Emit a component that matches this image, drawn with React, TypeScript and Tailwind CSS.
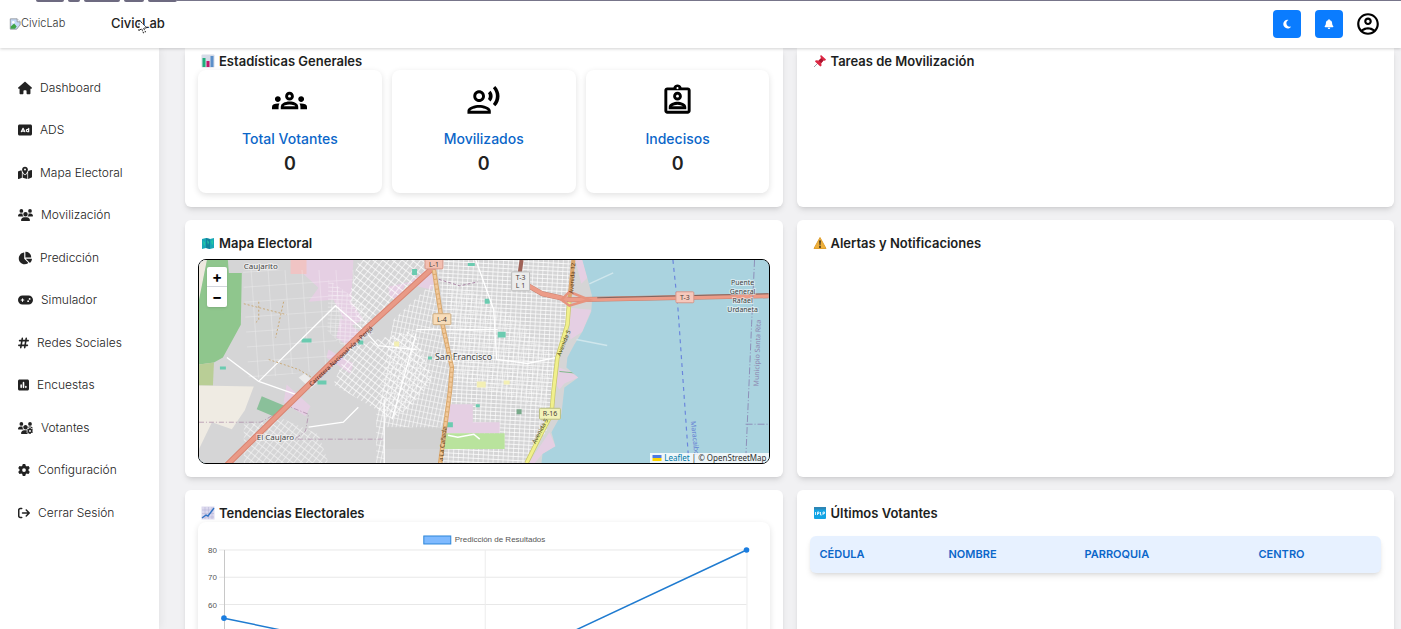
import type { ReactNode } from "react";
import {
  FaHouse,
  FaRectangleAd,
  FaMapLocationDot,
  FaUsers,
  FaChartPie,
  FaGamepad,
  FaHashtag,
  FaSquarePollVertical,
  FaUsersGear,
  FaGear,
  FaArrowRightFromBracket,
  FaMoon,
  FaBell,
} from "react-icons/fa6";
import {
  MdOutlineGroups,
  MdOutlineRecordVoiceOver,
  MdOutlineAssignmentInd,
  MdOutlineAccountCircle,
} from "react-icons/md";

// the icons differ in width, the label follows each one
const navItems = [
  { label: "Dashboard", Icon: FaHouse, size: "w-3.5" },
  { label: "ADS", Icon: FaRectangleAd, size: "w-3.5" },
  { label: "Mapa Electoral", Icon: FaMapLocationDot, size: "w-3.5" },
  { label: "Movilización", Icon: FaUsers, size: "w-[15px]" },
  { label: "Predicción", Icon: FaChartPie, size: "w-3.5" },
  { label: "Simulador", Icon: FaGamepad, size: "w-[15px]" },
  { label: "Redes Sociales", Icon: FaHashtag, size: "w-[11px]" },
  { label: "Encuestas", Icon: FaSquarePollVertical, size: "w-[11px]" },
  { label: "Votantes", Icon: FaUsersGear, size: "w-[15px]" },
  { label: "Configuración", Icon: FaGear, size: "w-3" },
  { label: "Cerrar Sesión", Icon: FaArrowRightFromBracket, size: "w-3" },
];

const stats = [
  { label: "Total Votantes", value: 0, icon: <MdOutlineGroups /> },
  { label: "Movilizados", value: 0, icon: <MdOutlineRecordVoiceOver /> },
  { label: "Indecisos", value: 0, icon: <MdOutlineAssignmentInd /> },
];

const BarsIcon = () => (
  <svg viewBox="0 0 14 14" className="size-3.5">
    <rect x="0.5" y="0.5" width="13" height="13" rx="1" fill="#d5dbe8" />
    <rect x="1.5" y="4" width="3" height="9" fill="#1fae7a" />
    <rect x="5.5" y="7" width="3" height="6" fill="#c2186b" />
    <rect x="9.5" y="2" width="3" height="11" fill="#5b8fc9" />
  </svg>
);

const MapIcon = () => (
  <svg viewBox="0 0 14 14" className="size-3.5">
    <path d="M1 3l4-1 4 1 4-1v10l-4 1-4-1-4 1z" fill="#18a7b5" />
    <path d="M5 2l4 1v10l-4-1z" fill="#13839c" />
    <path d="M2 5l2 1v3l-1 1zM6 4l2 2-1 3zM10 5l2-1v4l-1 1z" fill="#22c7a5" />
  </svg>
);

const TrendIcon = () => (
  <svg viewBox="0 0 14 14" className="size-3.5">
    <rect x="0.5" y="0.5" width="13" height="13" fill="#dcd9ee" />
    <path d="M1 4h12M1 7.500h12M1 11h12M4 1v12M7.500 1v12M11 1v12" stroke="#b9b7d8" strokeWidth="0.6" />
    <path d="M1 12l4-3 2 1 6-8" stroke="#3173c4" strokeWidth="1.4" fill="none" />
  </svg>
);

const PinIcon = () => (
  <svg viewBox="0 0 14 14" className="size-3.5">
    <path d="M5.500 8.500L1 13" stroke="#9aa0a8" strokeWidth="1" />
    <path d="M8 1l5 4.500-1 1.200-1.500-.2-2.200 2.400.2 2.800-1.200.8L2 7.500l.8-1.200 2.900.2L8 4.200 7.200 2z" fill="#dc2743" />
    <path d="M5.700 6.500L8 4.200l2.500 2.300-2.200 2.400z" fill="#a9142f" />
  </svg>
);

const WarningIcon = () => (
  <svg viewBox="0 0 14 14" className="size-3.5">
    <path d="M7 1.500l6 11H1z" fill="#eeb03c" stroke="#e0a030" strokeLinejoin="round" />
    <path d="M6.200 4.500h1.600L7.400 9.500h-.8z" fill="#2b2118" />
    <circle cx="7" cy="11" r="0.9" fill="#2b2118" />
  </svg>
);

const BallotIcon = () => (
  <svg viewBox="0 0 14 14" className="size-3.5">
    <rect x="1" y="1" width="12" height="12" rx="1" fill="#12a4e4" />
    <rect x="1" y="1" width="12" height="2.500" fill="#2d86b5" />
    <path d="M2.500 6v3M4.500 6v3M4.500 6h1.500v1.500H4.500M7.500 6v3h1.200M10 9V6h1.500v1.500H10" stroke="#e6f6ff" strokeWidth="0.9" fill="none" />
  </svg>
);

type CardProps = { title: string; icon: ReactNode; className?: string; children?: ReactNode };

const Card = ({ title, icon, className = "rounded-md pt-4", children }: CardProps) => (
  <section className={`bg-white px-[13px] shadow-md ${className}`}>
    <h2 className="flex items-center gap-1 pl-[3px] text-[13px] leading-[14px] font-semibold text-[#1c1e21]">
      {icon}
      {title}
    </h2>
    {children}
  </section>
);

const Shield = ({ x, y, w, h = 11, fill, stroke, text }: { x: number; y: number; w: number; h?: number; fill: string; stroke: string; text: string[] }) => (
  <g>
    <rect x={x} y={y} width={w} height={h} rx="1" fill={fill} stroke={stroke} />
    {text.map((t, i) => (
      <text key={i} x={x + w / 2} y={y + 8 + i * 8} textAnchor="middle" fontSize="7" fill="#4a4038">
        {t}
      </text>
    ))}
  </g>
);

const ElectoralMap = () => (
  <div className="relative mt-[9px] h-[205px] overflow-hidden rounded-lg border border-black bg-[#aad3df]">
    <svg viewBox="0 0 572 204" preserveAspectRatio="xMidYMid slice" className="size-full font-['Noto_Sans',sans-serif]">
      <defs>
        <pattern id="fine" width="5" height="4" patternUnits="userSpaceOnUse" patternTransform="rotate(3)">
          <path d="M0 0H5M0 0V4" stroke="#fff" strokeWidth="1.300" />
        </pattern>
        <pattern id="tilt" width="5" height="6" patternUnits="userSpaceOnUse" patternTransform="rotate(38)">
          <path d="M0 0H5M0 0V6" stroke="#fff" strokeWidth="1.300" />
        </pattern>
        <pattern id="slant" width="4" height="6" patternUnits="userSpaceOnUse" patternTransform="rotate(12)">
          <path d="M0 0H4M0 0V6" stroke="#fff" strokeWidth="1.200" />
        </pattern>
        <pattern id="wide" width="17" height="15" patternUnits="userSpaceOnUse" patternTransform="rotate(-4)">
          <path d="M0 0H17M0 0V15" stroke="#fff" strokeWidth="1" />
        </pattern>
        <clipPath id="land">
          <path d="M0 0H385L390 18 395 37 394 52 385 72 377 85 370 98 369 108 381 118 367 128 364 155 354 173 358 187 345 195 344 204H0z" />
        </clipPath>
      </defs>
      <rect width="572" height="204" fill="#aad3df" />
      <g clipPath="url(#land)">
        <rect width="400" height="204" fill="#d5d5d6" />
        <path d="M0 0H8L0 42z" fill="#eee9df" />
        <path d="M8 0H29L30 13 43 13 42 65 24 98 15 103 0 105V40z" fill="#8fc68d" />
        <path d="M0 105L15 103 14 126 0 126z" fill="#b9ce96" />
        <path d="M0 126L55 127 46 151 33 170 13 163 0 190z" fill="#efebe3" />
        <path d="M63 137L87 147 77 158 58 150z" fill="#8ac09a" />
        <path d="M107 0H155L153 42 165 60 150 68 135 40 110 42 120 28 105 14z" fill="#e5cfe3" />
        <path d="M92 0h16v14H92z" fill="#f0c4c4" />
        <path d="M190 27L212 22 228 10 238 16 234 30 208 24 200 39 192 38z" fill="#e5cfe3" />
        <path d="M130 90L155 104 152 114 128 98zM88 125l24 22-5 10-22-14z" fill="#e5cfe3" />
        <path d="M142 58l22 16-12 14-14-10z" fill="#e5cfe3" />

        <path d="M160 0L232 0 228 14 165 68 150 40z" fill="url(#tilt)" />
        <path d="M150 88L215 70 235 120 215 145 195 160 135 125z" fill="url(#tilt)" />
        <path d="M195 60L238 20 253 110 246 170 186 168 186 204 178 204V155z" fill="url(#slant)" />
        <path d="M238 0H374L370 60 356 130 350 170 328 204H256L244 204 256 120z" fill="url(#fine)" />
        <path d="M250 16L320 60 355 96 348 150 256 120z" fill="url(#slant)" opacity="0.600" />
        <path d="M45 165l40-5 35 15 10 29H45z" fill="url(#tilt)" opacity="0.700" />
        <path d="M44 10H160L130 110 50 120z" fill="url(#wide)" opacity="0.500" />
        <path d="M130 20l36 25 10 28-25 20-22-22z" fill="url(#fine)" opacity="0.500" />
        <path d="M186 168h58v22h-58z" fill="#cfcfd0" opacity="0.800" />
        <path d="M100 118l6-4 12 10-6 5z" fill="#ececec" />

        <path d="M250 145h25v18h27v11H245z" fill="#e5cfe3" />
        <path d="M245 174h62v16H245z" fill="#b9e39d" />
        <path d="M250 176l10 2 16-3 6 5" stroke="#fff" strokeWidth="1.500" fill="none" />
        <path d="M378 0l7 0 5 18-6 6zM372 48l22 2-9 22-12 8zM362 108l10 4 9 6-14 6-5 6-4-6zM352 173l6 14-13 8-8 9h-6z" fill="#e5cfe3" />
        <path d="M362 112l20 2" stroke="#7fb789" />
        <path d="M279 122h9v6h-9zM196 82h5v5h-5zM306 121h6v4h-6z" fill="#f3efb4" />
        <path d="M103 79h10v4h-10zM119 121h9v4h-9zM21 107h6v3h-6zM160 81h5v4h-5zM230 97h4v3h-4zM300 72h8v6h-8zM287 39h5v5h-5zM270 3h7v3h-7zM214 9h5v6h-5zM249 163h6v5h-6zM278 145h4v3h-4z" fill="#6bcbb0" />
        <path d="M319 150h5v5h-5z" fill="#78a98a" />

        <path d="M60 122L137 46 167 72 180 86 218 90M28 98L60 122 100 136M218 70H300M218 74L194 160M110 168L145 163 160 148M278 0L296 50 299 100 330 104 358 98M186 140V204" stroke="#fff" strokeWidth="1.300" fill="none" />
        <path d="M45 44L88 55M60 42v18l-4 4M85 42l-8 36M70 100l30 10 20 12" stroke="#c9a979" strokeDasharray="2 2" fill="none" />
        <path d="M0 163H62L90 147 110 155 107 172 96 180H186" stroke="#a884a4" strokeDasharray="5 2 1 2" fill="none" opacity="0.700" />
        <path d="M236 18L262 26 280 22" stroke="#a884a4" strokeDasharray="3 2" fill="none" />

        <path d="M28 206L169 68 237 6" stroke="#d98472" strokeWidth="6" fill="none" />
        <path d="M28 206L169 68 237 6" stroke="#e99a87" strokeWidth="4" fill="none" />
        <path d="M236 10L244 62 254 108 252 132 242 206" stroke="#d9a86e" strokeWidth="4.500" fill="none" />
        <path d="M236 10L244 62 254 108 252 132 242 206" stroke="#f2c99a" strokeWidth="2.500" strokeDasharray="4 1" fill="none" />
      </g>

      <path d="M376 0L372 40" stroke="#dba66c" strokeWidth="4" fill="none" />
      <path d="M372 40L370 65 360 98 356 132 354 155 345 172 329 204" stroke="#c9c86c" strokeWidth="4.500" fill="none" />
      <path d="M372 40L370 65 360 98 356 132 354 155 345 172 329 204" stroke="#f1f08c" strokeWidth="3" fill="none" />
      <path d="M324 0L322 14" stroke="#a06358" strokeWidth="4" fill="none" />
      <path d="M324 22L345 34 372 40 572 36" stroke="#c9806f" strokeWidth="5" fill="none" />
      <path d="M324 22L345 34 372 40 572 36" stroke="#ec9c88" strokeWidth="4" fill="none" />
      <path d="M400 38L572 34" stroke="#80645e" strokeWidth="1" />
      <path d="M364 40L372 32 392 40 372 46z" stroke="#e6937e" strokeWidth="2.500" fill="none" />
      <path d="M392 24l24-11M379 80l31 6" stroke="#cfe6ec" strokeWidth="1.500" />
      <path d="M476 0L481 48 492 204" stroke="#6a86dc" strokeWidth="1.200" strokeDasharray="4 4" fill="none" />
      <path d="M558 0L555 65 549 204M549 165H572" stroke="#8d8fb8" strokeDasharray="7 2 1 2" fill="none" />

      <Shield x={227} y={-1} w={18} h={10} fill="#f3bfb1" stroke="#d5978a" text={["L-1"]} />
      <Shield x={235} y={54} w={18} fill="#f7dcb9" stroke="#cfae82" text={["L-4"]} />
      <Shield x={314} y={12} w={18} h={19} fill="#ececec" stroke="#bbb" text={["T-3", "L 1"]} />
      <Shield x={479} y={32} w={18} fill="#f6c8bc" stroke="#d5978a" text={["T-3"]} />
      <Shield x={342} y={149} w={21} fill="#f1f2b8" stroke="#bcbf82" text={["R-16"]} />

      <g fill="#444" fontSize="8" stroke="#fff" strokeWidth="2" strokeOpacity="0.500" paintOrder="stroke">
        <text x="45" y="9">Caujarito</text>
        <text x="58" y="181">El Caujaro</text>
        <text x="237" y="100" fontSize="9">San Francisco</text>
        <g textAnchor="middle" fontSize="7">
          <text x="546" y="25">Puente</text>
          <text x="546" y="34">General</text>
          <text x="546" y="43">Rafael</text>
          <text x="546" y="52">Urdaneta</text>
        </g>
      </g>
      <g fontSize="6">
        <text transform="translate(113 127) rotate(-43)" fill="#42221c">Carretera Nacional vía a Perijá</text>
        <text transform="translate(245 202) rotate(-84)" fill="#5a3c18">a La Cañada</text>
        <text transform="translate(376 34) rotate(-86)" fill="#5a3c18">Avenida 12</text>
        <text transform="translate(363 97) rotate(-68)" fill="#4d4c22">Avenida 5</text>
        <text transform="translate(338 185) rotate(-62)" fill="#4d4c22">Avenida 5</text>
        <text transform="translate(562 127) rotate(-88)" fontSize="7" fill="#8d86b0">Municipio Santa Rita</text>
        <text transform="translate(494 162) rotate(84)" fontSize="7" fill="#5f7ad2">Maracaibo</text>
      </g>
    </svg>

    <div className="absolute top-[7px] left-2 flex w-5 flex-col divide-y divide-gray-300 rounded-xs bg-white text-[15px] leading-[18px] font-bold text-black shadow">
      <button type="button" aria-label="Acercar" className="h-5">+</button>
      <button type="button" aria-label="Alejar" className="h-5">−</button>
    </div>
    <div className="absolute right-0 bottom-0 flex items-center gap-0.5 bg-white/80 px-0.5 font-['Noto_Sans',sans-serif] text-[8px] leading-[10px] text-[#333]">
      <svg viewBox="0 0 12 8" className="h-1.5 w-2.5">
        <path fill="#4C7BE1" d="M0 0h12v4H0z" />
        <path fill="#FFD500" d="M0 4h12v4H0z" />
      </svg>
      <a href="#leaflet" className="text-[#0078a8]">Leaflet</a>
      <span>| © OpenStreetMap</span>
    </div>
  </div>
);

const chartData = [55, 35, 80];
const chartX = [26, 287, 549];
const toY = (v: number) => 28 + (80 - v) * 2.73;

const TrendChart = () => (
  <div className="mt-0.5 rounded-lg shadow-[0_2px_6px_rgba(0,0,0,0.12)]">
    <svg viewBox="0 0 572 220" className="w-full font-['Liberation_Sans',sans-serif]">
      <rect x="226" y="14" width="27" height="8" fill="#7fbaff" stroke="#2d86d9" />
      <text x="257" y="20" fontSize="8" fill="#555">
        Predicción de Resultados
      </text>
      {[80, 70, 60, 50].map((tick) => (
        <g key={tick}>
          <path d={`M21 ${toY(tick)}H549`} stroke="#e8e8e8" />
          <text x="19" y={toY(tick) + 3} fontSize="8" textAnchor="end" fill="#555">
            {tick}
          </text>
        </g>
      ))}
      <path d="M287.500 28V200M549.500 28V200" stroke="#ececec" />
      <path d="M26.500 28V200" stroke="#c8c8c8" />
      <polyline
        points={chartData.map((v, i) => `${chartX[i]},${toY(v)}`).join(" ")}
        fill="none"
        stroke="#1f7bd0"
        strokeWidth="1.500"
      />
      {chartData.map((v, i) => (
        <circle key={i} cx={chartX[i]} cy={toY(v)} r="2.800" fill="#1a7de0" />
      ))}
    </svg>
  </div>
);

const Header = () => (
  <header className="relative z-20 flex h-12 shrink-0 items-center border-t border-[#77758a] bg-white pr-5 pb-0.5 pl-[9px] shadow-[0_1px_3px_rgba(0,0,0,0.18)]">
    <div className="absolute -top-px left-0 flex h-1 w-[177px] gap-1 bg-white pl-9">
      <span className="h-0.5 w-7 rounded-b bg-[#6d6a80]" />
      <span className="h-0.5 w-3 rounded-b bg-[#6d6a80]" />
      <span className="h-0.5 w-9 rounded-b bg-[#6d6a80]" />
      <span className="h-0.5 w-5 rounded-b bg-[#6d6a80]" />
      <span className="h-0.5 flex-1 rounded-b bg-[#6d6a80]" />
    </div>
    <div className="flex w-[102px] items-center text-[11px] font-light text-[#333]">
      <svg viewBox="0 0 14 14" className="size-3">
        <path d="M1.500 1h8L13 4.500V8L9 13H1.500z" fill="#c4d9f8" stroke="#909398" />
        <path d="M9.500 1v3.500H13" fill="#fff" stroke="#909398" />
        <path d="M2 12.500V10l4-3.500L9 10l-2 2.500z" fill="#3fa548" />
        <circle cx="5" cy="5" r="1.500" fill="#fff" />
      </svg>
      CivicLab
    </div>
    <h1 className="text-[13px] font-medium text-[#222]">CivicLab</h1>
    <svg viewBox="0 0 12 16" className="absolute top-[18px] left-[137px] h-4 w-3">
      <path d="M2 1v11l2.500-2.500L6.500 14l2-1-2-4H10z" fill="#fff" stroke="#222" strokeDasharray="2 1" />
    </svg>
    <div className="ml-auto flex items-center">
      <button type="button" aria-label="Modo oscuro" className="mr-3.5 flex size-7 items-center justify-center rounded bg-[#0a7cff] text-[10px] text-white">
        <FaMoon />
      </button>
      <button type="button" aria-label="Notificaciones" className="mr-3 flex size-7 items-center justify-center rounded bg-[#0a7cff] text-[10px] text-white">
        <FaBell />
      </button>
      <button type="button" aria-label="Perfil" className="text-[26px] text-black">
        <MdOutlineAccountCircle />
      </button>
    </div>
  </header>
);

const App = () => {
  return (
    <div className="flex h-screen flex-col overflow-hidden bg-[#f1f1f3] font-[Inter,sans-serif]">
      <Header />
      <div className="flex min-h-0 flex-1">
        <nav className="z-10 w-[159px] shrink-0 bg-white pt-[18px] pl-[18px] shadow-[2px_0_8px_rgba(0,0,0,0.06)]">
          <ul>
            {navItems.map(({ label, Icon, size }) => (
              <li key={label} className="h-[43px] not-first:-mt-px nth-[2n]:h-[44px]">
                <a href="#" className="flex h-full items-center gap-2 text-xs font-light text-[#222]">
                  <Icon className={`h-3.5 ${size}`} />
                  {label}
                </a>
              </li>
            ))}
          </ul>
        </nav>

        <main className="grid min-w-0 flex-1 grid-cols-2 content-start gap-x-3.5 gap-y-[13px] pr-[7px] pl-[26px]">
          <Card title="Estadísticas Generales" icon={<BarsIcon />} className="rounded-b-md pt-1.5 pb-3.5">
            <div className="mt-0.5 grid grid-cols-3 gap-2.5">
              {stats.map((stat) => (
                <div key={stat.label} className="flex h-[123px] flex-col items-center rounded-lg bg-white pt-[13px] shadow-[0_2px_6px_rgba(0,0,0,0.12)]">
                  <span className="text-[35px] text-black">{stat.icon}</span>
                  <h3 className="mt-3 text-sm leading-[18px] font-medium text-[#0b66c9]">{stat.label}</h3>
                  <p className="mt-1 text-lg leading-6 font-semibold text-[#222]">{stat.value}</p>
                </div>
              ))}
            </div>
          </Card>
          <Card title="Tareas de Movilización" icon={<PinIcon />} className="rounded-b-md pt-1.5" />

          <Card title="Mapa Electoral" icon={<MapIcon />} className="rounded-md pt-4 pb-[13px]">
            <ElectoralMap />
          </Card>
          <Card title="Alertas y Notificaciones" icon={<WarningIcon />} />

          <Card title="Tendencias Electorales" icon={<TrendIcon />}>
            <TrendChart />
          </Card>
          <Card title="Últimos Votantes" icon={<BallotIcon />}>
            <table className="mt-4 w-full table-fixed overflow-hidden rounded-md bg-[#e7f1ff] text-left shadow-md">
              <thead>
                <tr className="h-[37px] text-[11px] text-[#0b66c9]">
                  <th className="w-[129px] px-2.5 font-semibold">CÉDULA</th>
                  <th className="w-[136px] px-2.5 font-semibold">NOMBRE</th>
                  <th className="w-[174px] px-2.5 font-semibold">PARROQUIA</th>
                  <th className="px-2.5 font-semibold">CENTRO</th>
                </tr>
              </thead>
            </table>
          </Card>
        </main>
      </div>
    </div>
  );
};

export default App;
